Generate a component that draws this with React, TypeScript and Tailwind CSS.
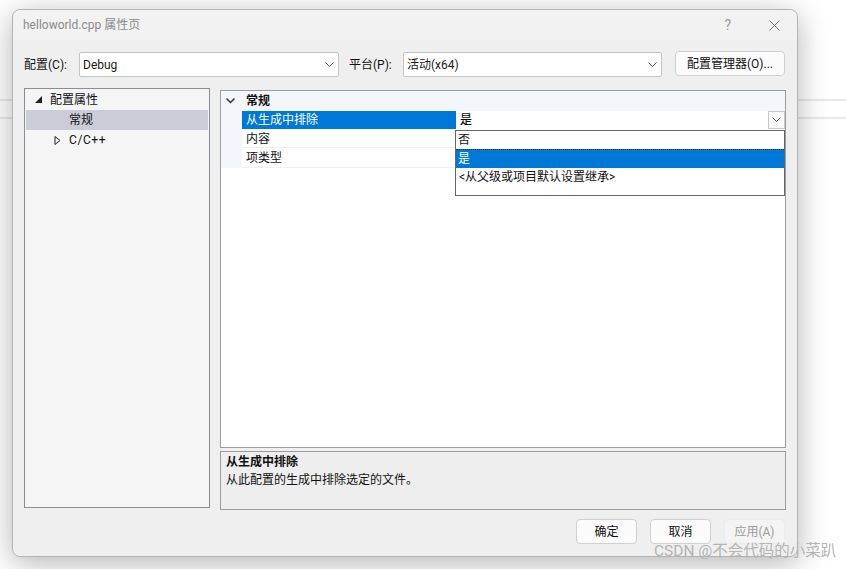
const font = { fontFamily: 'Roboto, "Noto Sans CJK SC", "Noto Sans", sans-serif' };

function Chevron() {
  return (
    <svg width="9" height="6" viewBox="0 0 9 6" fill="none" stroke="#555" strokeWidth="1">
      <path d="M0.5 0.5 L4.5 4.5 L8.5 0.5" />
    </svg>
  );
}

function Select({ label, width }: { label: string; width: string }) {
  return (
    <div className={`${width} h-[25px] mt-px bg-white border border-[#c4c4c4] rounded-[2px] flex items-center justify-between pl-[3px] pr-[4px] text-[12px] text-[#1a1a1a]`}>
      <span>{label}</span>
      <Chevron />
    </div>
  );
}

export default function App() {
  return (
    <div className="relative w-[846px] h-[569px] overflow-hidden bg-white pl-[12px] pt-[9px] text-[12px] leading-none text-[#111]" style={font}>
      <div className="absolute left-0 right-0 top-[99px] h-[2px] bg-[#e9e8ef]" />
      <div className="absolute left-0 right-0 top-[117px] h-[2px] bg-[#e9e8ef]" />
      <div className="relative w-[786px] h-[548px] bg-[#efefef] border border-[#b4b4b4] rounded-[8px] shadow-[0_6px_30px_rgba(0,0,0,0.3)] flex flex-col">
        <div className="h-[30px] bg-[#f2f2f2] rounded-t-[8px] flex items-center justify-between pl-[10px] pr-[17px] text-[#8a8a8a] text-[12px] shrink-0">
          <span>helloworld.cpp 属性页</span>
          <div className="flex items-center gap-[38px]">
            <span className="text-[14px] text-[#999]">?</span>
            <svg width="11" height="11" viewBox="0 0 11 11" stroke="#777" strokeWidth="1"><path d="M0.5 0.5 L10.5 10.5 M10.5 0.5 L0.5 10.5" /></svg>
          </div>
        </div>

        <div className="flex items-start h-[26px] mt-[11px] pl-[11px] shrink-0">
          <span className="w-[55px] h-[25px] mt-px flex items-center">配置(C):</span>
          <Select label="Debug" width="w-[260px]" />
          <span className="ml-[10px] w-[54px] h-[25px] mt-px flex items-center">平台(P):</span>
          <Select label="活动(x64)" width="w-[259px]" />
          <div className="ml-[13px] w-[110px] h-[25px] bg-[#fbfbfb] border border-[#d0d0d0] rounded-[4px] flex items-center justify-center">配置管理器(O)...</div>
        </div>

        <div className="flex items-start mt-[11px] pl-[11px] gap-[10px] shrink-0">
          <div className="w-[186px] h-[420px] bg-[#f5f5f5] border border-[#8c8c94] px-px">
            <div className="h-[21px] flex items-center pl-[9px]">
              <svg width="7" height="7" viewBox="0 0 7 7" fill="#222"><path d="M7 0 V7 H0 Z" /></svg>
              <span className="ml-[8px]">配置属性</span>
            </div>
            <div className="h-[20px] flex items-center pl-[43px] bg-[#cbccd8]">常规</div>
            <div className="h-[20px] flex items-center pl-[28px]">
              <svg width="7" height="9" viewBox="0 0 7 9" fill="none" stroke="#222"><path d="M1 0.5 L6 4.5 L1 8.5 Z" /></svg>
              <span className="ml-[8px] tracking-[0.6px]">C/C++</span>
            </div>
          </div>

          <div className="w-[566px] mt-[2px] flex flex-col gap-[3px]">
            <div className="relative h-[358px] bg-white border border-[#9c9c9c]">
              <div className="h-[20px] bg-[#f3f6fb] flex items-center font-bold">
                <svg width="9" height="6" viewBox="0 0 9 6" fill="none" stroke="#333" strokeWidth="1.5" className="ml-[5px]"><path d="M0.5 0.5 L4.5 4.5 L8.5 0.5" /></svg>
                <span className="ml-[11px]">常规</span>
              </div>
              <div className="flex">
                <div className="w-[21px] h-[57px] bg-[#f3f6fb]" />
                <div className="flex-1">
                  <div className="h-[18px] flex">
                    <div className="w-[214px] bg-[#0078d7] text-white flex items-center pl-[4px]">从生成中排除</div>
                    <div className="flex-1 flex items-center justify-between pl-[4px]">
                      <span className="font-medium">是</span>
                      <div className="w-[17px] h-[18px] bg-white border border-[#c8c8c8] flex items-center justify-center"><Chevron /></div>
                    </div>
                  </div>
                  <div className="h-[19px] flex items-center pl-[4px] pt-px border-b border-[#eef0f3]">内容</div>
                  <div className="h-[20px] flex items-center pl-[4px] border-b border-[#eef0f3]">项类型</div>
                </div>
              </div>
              <div className="absolute left-[234px] top-[39px] w-[330px] h-[66px] bg-white border border-[#666]">
                <div className="h-[18px] flex items-center pl-[2px]">否</div>
                <div className="h-[19px] flex items-center pl-[2px] bg-[#0078d7] text-white border-t border-dotted border-[#333]">是</div>
                <div className="h-[18px] flex items-center pl-[3px]">&lt;从父级或项目默认设置继承&gt;</div>
              </div>
            </div>
            <div className="h-[59px] bg-[#eeeeee] border border-[#9c9c9c] pl-[5px] pt-[3px]">
              <div className="font-bold h-[14px] flex items-center">从生成中排除</div>
              <div className="h-[18px] flex items-center mt-[2px]">从此配置的生成中排除选定的文件。</div>
            </div>
          </div>
        </div>

        <div className="flex justify-end gap-[13px] mt-[9px] pr-[12px]">
          <div className="w-[61px] h-[25px] bg-[#fbfbfb] border border-[#d0d0d0] rounded-[4px] flex items-center justify-center">确定</div>
          <div className="w-[61px] h-[25px] bg-[#fbfbfb] border border-[#d0d0d0] rounded-[4px] flex items-center justify-center">取消</div>
          <div className="w-[61px] h-[25px] bg-[#f4f4f4] border border-[#ececec] rounded-[4px] flex items-center justify-center text-[#9a9a9a]">应用(A)</div>
        </div>
      </div>
      <div className="absolute left-[654px] top-[544px] text-[15.5px] text-[#b4b4b4] whitespace-nowrap">CSDN @不会代码的小菜趴</div>
    </div>
  );
}
